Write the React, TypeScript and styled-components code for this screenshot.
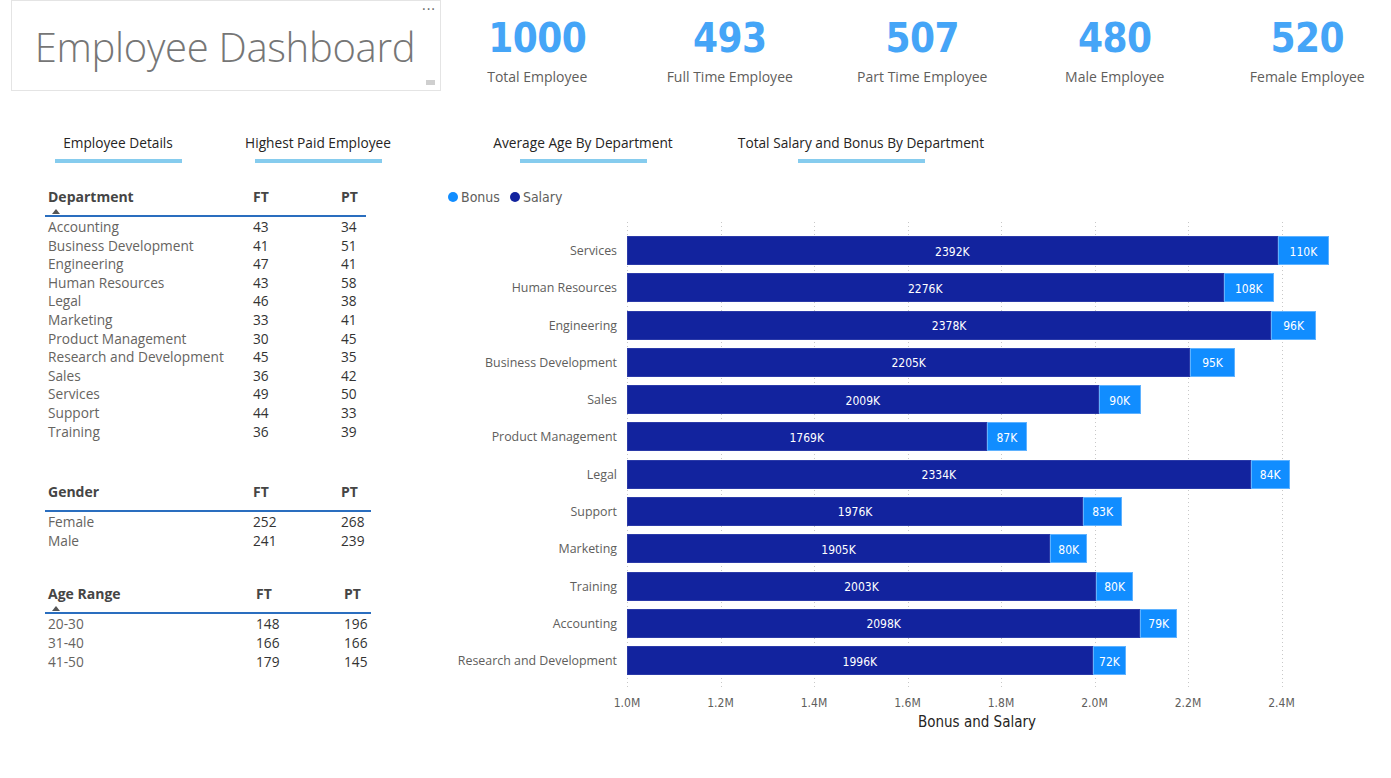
import React from "react";
import styled, { createGlobalStyle } from "styled-components";

const uiFont = `"Open Sans", "Noto Sans", sans-serif`;
const dinFont = `"DejaVu Sans Condensed", "Roboto Condensed", "Liberation Sans Narrow", Roboto, sans-serif`;

const GlobalStyle = createGlobalStyle`
  body {
    margin: 0;
    background: #ffffff;
    font-family: ${uiFont};
  }
`;

const Page = styled.div`
  width: 1391px;
  height: 778px;
  overflow: hidden;
  background: #fff;
`;

const Header = styled.div`
  display: flex;
  align-items: flex-start;
  height: 91px;
`;

const TitleBox = styled.div`
  position: relative;
  flex-shrink: 0;
  margin-left: 11px;
  width: 430px;
  height: 91px;
  box-sizing: border-box;
  border: 1px solid #e4e4e4;
  display: flex;
  align-items: center;
  justify-content: center;
`;

const Title = styled.h1`
  margin: 2px 2px 0 0;
  font-family: ${uiFont};
  font-weight: 300;
  font-size: 40px;
  letter-spacing: -0.3px;
  white-space: nowrap;
  color: #767676;
`;

const MoreDots = styled.span`
  position: absolute;
  top: -2px;
  right: 4px;
  font-size: 14px;
  letter-spacing: 1px;
  color: #666;
`;

const ResizeHandle = styled.span`
  position: absolute;
  right: 5px;
  bottom: 5px;
  width: 9px;
  height: 5px;
  background: #cfcfcf;
`;

const KpiRow = styled.div`
  flex-shrink: 0;
  display: grid;
  grid-template-columns: repeat(5, 192.5px);
`;

const Kpi = styled.div`
  display: flex;
  flex-direction: column;
  align-items: center;
`;

const KpiValue = styled.div`
  margin-top: 14px;
  font-family: ${dinFont};
  font-size: 40px;
  line-height: 48px;
  font-weight: 700;
  letter-spacing: -0.5px;
  color: #45a5f7;
`;

const KpiLabel = styled.div`
  margin-top: 5px;
  font-size: 14px;
  line-height: 20px;
  color: #5f5e5c;
`;

const TabRow = styled.div`
  display: flex;
  margin-top: 42px;
  padding-left: 18px;
`;

const Tab = styled.div<{ $w: number }>`
  width: ${(p) => p.$w}px;
  display: flex;
  flex-direction: column;
  align-items: center;
`;

const TabText = styled.span`
  font-size: 13.7px;
  line-height: 20px;
  color: #252423;
  white-space: nowrap;
`;

const TabLine = styled.span`
  margin-top: 6px;
  width: 127px;
  height: 4px;
  background: #86ccee;
`;

const Main = styled.div`
  display: flex;
  margin-top: 24px;
`;

const LeftCol = styled.div`
  margin-left: 45px;
  width: 326px;
  display: flex;
  flex-direction: column;
`;

const Table = styled.div<{ $w: number; $gap: number }>`
  width: ${(p) => p.$w}px;
  margin-top: ${(p) => p.$gap}px;
`;

const HeadRow = styled.div<{ $first: number }>`
  display: grid;
  grid-template-columns: ${(p) => p.$first}px 88px 1fr;
  height: 28px;
  border-bottom: 2px solid #2a6ebf;
  margin-bottom: 1px;
`;

const HeadCell = styled.div`
  padding-left: 3px;
  font-size: 14px;
  line-height: 20px;
  font-weight: 700;
  color: #454545;
`;

const SortArrow = styled.div`
  margin: 2px 0 0 4px;
  width: 0;
  height: 0;
  border-left: 4px solid transparent;
  border-right: 4px solid transparent;
  border-bottom: 5px solid #555;
`;

const BodyRow = styled.div<{ $first: number }>`
  display: grid;
  grid-template-columns: ${(p) => p.$first}px 88px 1fr;
  font-size: 13.7px;
  line-height: 18.6px;
`;

const NameCell = styled.div`
  padding-left: 3px;
  color: #66645f;
  white-space: nowrap;
`;

const NumCell = styled.div`
  padding-left: 3px;
  color: #333;
`;

const ChartCol = styled.div`
  margin-left: 69px;
  width: 951px;
  display: flex;
  flex-direction: column;
`;

const Legend = styled.div`
  display: flex;
  align-items: center;
  gap: 10px;
  padding-left: 8px;
  height: 20px;
  font-family: ${dinFont};
  font-size: 14px;
  color: #605e5c;
`;

const LegendItem = styled.span`
  display: flex;
  align-items: center;
  gap: 3px;
`;

const Dot = styled.span<{ $c: string }>`
  width: 10px;
  height: 10px;
  border-radius: 50%;
  background: ${(p) => p.$c};
`;

const PlotArea = styled.div`
  position: relative;
  margin-top: 15px;
  padding: 10px 0 9px;
`;

const GridLayer = styled.svg`
  position: absolute;
  left: 187px;
  top: 0;
`;

const BarRow = styled.div`
  position: relative;
  display: flex;
  align-items: center;
  height: 37.27px;
`;

const BarLabel = styled.div`
  width: 177px;
  text-align: right;
  font-size: 12.4px;
  color: #605e5c;
  white-space: nowrap;
`;

const Track = styled.div`
  margin-left: 10px;
  display: flex;
  height: 29px;
`;

const Segment = styled.div<{ $c: string; $edge: string }>`
  display: flex;
  align-items: center;
  justify-content: center;
  box-sizing: border-box;
  background: ${(p) => p.$c};
  border: 1px solid ${(p) => p.$edge};
  font-family: ${dinFont};
  font-size: 12px;
  padding-top: 2px;
  color: #fff;
  white-space: nowrap;
`;

const AxisRow = styled.div`
  display: flex;
  margin-top: 7px;
  margin-left: 140.25px;
`;

const Tick = styled.span`
  width: 93.5px;
  text-align: center;
  font-family: ${dinFont};
  font-size: 12px;
  line-height: 16px;
  color: #605e5c;
`;

const AxisTitle = styled.div`
  margin-top: 1px;
  margin-left: 187px;
  width: 700px;
  text-align: center;
  font-family: ${dinFont};
  font-size: 15px;
  line-height: 20px;
  color: #252423;
`;

const SCALE = 0.4675;

const kpis = [
  { v: "1000", l: "Total Employee" },
  { v: "493", l: "Full Time Employee" },
  { v: "507", l: "Part Time Employee" },
  { v: "480", l: "Male Employee" },
  { v: "520", l: "Female Employee" },
];

const tabs = [
  { t: "Employee Details", w: 200 },
  { t: "Highest Paid Employee", w: 200 },
  { t: "Average Age By Department", w: 330 },
  { t: "Total Salary and Bonus By Department", w: 226 },
];

type Row = [string, number, number];

const departments: Row[] = [
  ["Accounting", 43, 34],
  ["Business Development", 41, 51],
  ["Engineering", 47, 41],
  ["Human Resources", 43, 58],
  ["Legal", 46, 38],
  ["Marketing", 33, 41],
  ["Product Management", 30, 45],
  ["Research and Development", 45, 35],
  ["Sales", 36, 42],
  ["Services", 49, 50],
  ["Support", 44, 33],
  ["Training", 36, 39],
];

const genders: Row[] = [
  ["Female", 252, 268],
  ["Male", 241, 239],
];

const ages: Row[] = [
  ["20-30", 148, 196],
  ["31-40", 166, 166],
  ["41-50", 179, 145],
];

const pay: Row[] = [
  ["Services", 2392, 110],
  ["Human Resources", 2276, 108],
  ["Engineering", 2378, 96],
  ["Business Development", 2205, 95],
  ["Sales", 2009, 90],
  ["Product Management", 1769, 87],
  ["Legal", 2334, 84],
  ["Support", 1976, 83],
  ["Marketing", 1905, 80],
  ["Training", 2003, 80],
  ["Accounting", 2098, 79],
  ["Research and Development", 1996, 72],
];

const ticks = ["1.0M", "1.2M", "1.4M", "1.6M", "1.8M", "2.0M", "2.2M", "2.4M"];

function DataTable(props: {
  title: string;
  rows: Row[];
  width: number;
  gap: number;
  first?: number;
  sorted?: boolean;
}) {
  const first = props.first ?? 205;
  return (
    <Table $w={props.width} $gap={props.gap}>
      <HeadRow $first={first}>
        <HeadCell>
          {props.title}
          {props.sorted && <SortArrow />}
        </HeadCell>
        <HeadCell>FT</HeadCell>
        <HeadCell>PT</HeadCell>
      </HeadRow>
      {props.rows.map((r) => (
        <BodyRow key={r[0]} $first={first}>
          <NameCell>{r[0]}</NameCell>
          <NumCell>{r[1]}</NumCell>
          <NumCell>{r[2]}</NumCell>
        </BodyRow>
      ))}
    </Table>
  );
}

function GridLines() {
  const h = 466;
  return (
    <GridLayer width="660" height={h}>
      {ticks.map((t, i) => {
        const x = Math.round(i * 93.5) + 0.5;
        return (
          <line
            key={t}
            x1={x}
            x2={x}
            y1={0}
            y2={h}
            stroke="#c8c8c8"
            strokeDasharray="1 3"
          />
        );
      })}
    </GridLayer>
  );
}

export default function App() {
  return (
    <Page>
      <GlobalStyle />
      <Header>
        <TitleBox>
          <Title>Employee Dashboard</Title>
          <MoreDots>···</MoreDots>
          <ResizeHandle />
        </TitleBox>
        <KpiRow>
          {kpis.map((k) => (
            <Kpi key={k.l}>
              <KpiValue>{k.v}</KpiValue>
              <KpiLabel>{k.l}</KpiLabel>
            </Kpi>
          ))}
        </KpiRow>
      </Header>

      <TabRow>
        {tabs.map((t) => (
          <Tab key={t.t} $w={t.w}>
            <TabText>{t.t}</TabText>
            <TabLine />
          </Tab>
        ))}
      </TabRow>

      <Main>
        <LeftCol>
          <DataTable title="Department" rows={departments} width={321} gap={0} sorted />
          <DataTable title="Gender" rows={genders} width={326} gap={41} />
          <DataTable title="Age Range" rows={ages} width={326} gap={34} first={208} sorted />
        </LeftCol>

        <ChartCol>
          <Legend>
            <LegendItem>
              <Dot $c="#118dff" />
              Bonus
            </LegendItem>
            <LegendItem>
              <Dot $c="#12239e" />
              Salary
            </LegendItem>
          </Legend>
          <PlotArea>
            <GridLines />
            {pay.map((p) => (
              <BarRow key={p[0]}>
                <BarLabel>{p[0]}</BarLabel>
                <Track>
                  <Segment
                    $c="#12239e"
                    $edge="#2b3aa8"
                    style={{ width: (p[1] - 1000) * SCALE }}
                  >
                    {p[1]}K
                  </Segment>
                  <Segment
                    $c="#118dff"
                    $edge="#5fb2ff"
                    style={{ width: p[2] * SCALE }}
                  >
                    {p[2]}K
                  </Segment>
                </Track>
              </BarRow>
            ))}
          </PlotArea>
          <AxisRow>
            {ticks.map((t) => (
              <Tick key={t}>{t}</Tick>
            ))}
          </AxisRow>
          <AxisTitle>Bonus and Salary</AxisTitle>
        </ChartCol>
      </Main>
    </Page>
  );
}
